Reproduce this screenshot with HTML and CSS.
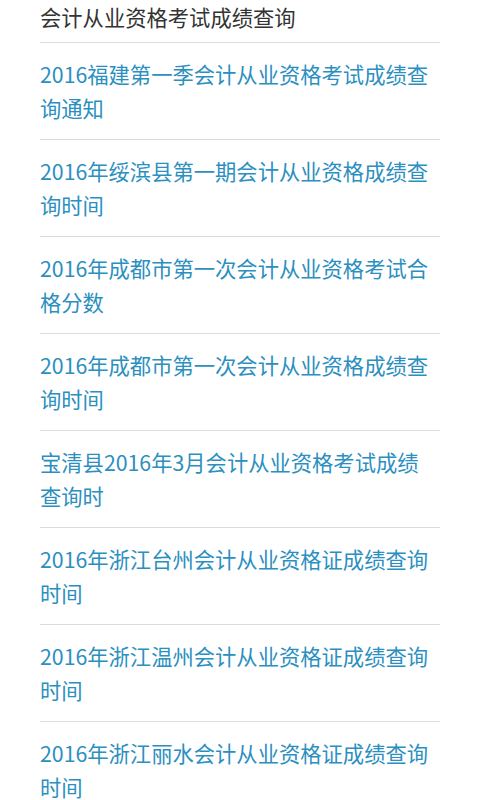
FILE: index.html
```html
<!DOCTYPE html>
<html lang="zh-CN">
<head>
<meta charset="utf-8">
<title>会计从业资格考试成绩查询</title>
<link rel="stylesheet" href="styles.css">
</head>
<body>
<div class="page">
  <div class="title">会计从业资格考试成绩查询</div>
  <ul class="list">
    <li class="item"><a class="link" href="#">2016福建第一季会计从业资格考试成绩查询通知</a></li>
    <li class="item"><a class="link" href="#">2016年绥滨县第一期会计从业资格成绩查询时间</a></li>
    <li class="item"><a class="link" href="#">2016年成都市第一次会计从业资格考试合格分数</a></li>
    <li class="item"><a class="link" href="#">2016年成都市第一次会计从业资格成绩查询时间</a></li>
    <li class="item"><a class="link" href="#">宝清县2016年3月会计从业资格考试成绩查询时</a></li>
    <li class="item"><a class="link" href="#">2016年浙江台州会计从业资格证成绩查询时间</a></li>
    <li class="item"><a class="link" href="#">2016年浙江温州会计从业资格证成绩查询时间</a></li>
    <li class="item"><a class="link" href="#">2016年浙江丽水会计从业资格证成绩查询时间</a></li>
  </ul>
</div>
</body>
</html>
```

FILE: styles.css
```css
html, body {
  margin: 0;
  padding: 0;
  background: #ffffff;
}
body {
  font-family: "Noto Sans CJK SC", "Noto Sans", sans-serif;
  overflow: hidden;
}
.page {
  padding: 0 40px;
}
.title {
  font-size: 21.3px;
  line-height: 33px;
  color: #333333;
  padding-bottom: 9px;
  border-bottom: 1px solid #dcdcdc;
}
.list {
  list-style: none;
  margin: 0;
  padding: 0;
}
.item {
  padding: 14px 5px 14px 0;
  border-bottom: 1px solid #dcdcdc;
}
.link {
  display: block;
  font-size: 21.3px;
  line-height: 34px;
  color: #2b8fc0;
  text-decoration: none;
}
```
